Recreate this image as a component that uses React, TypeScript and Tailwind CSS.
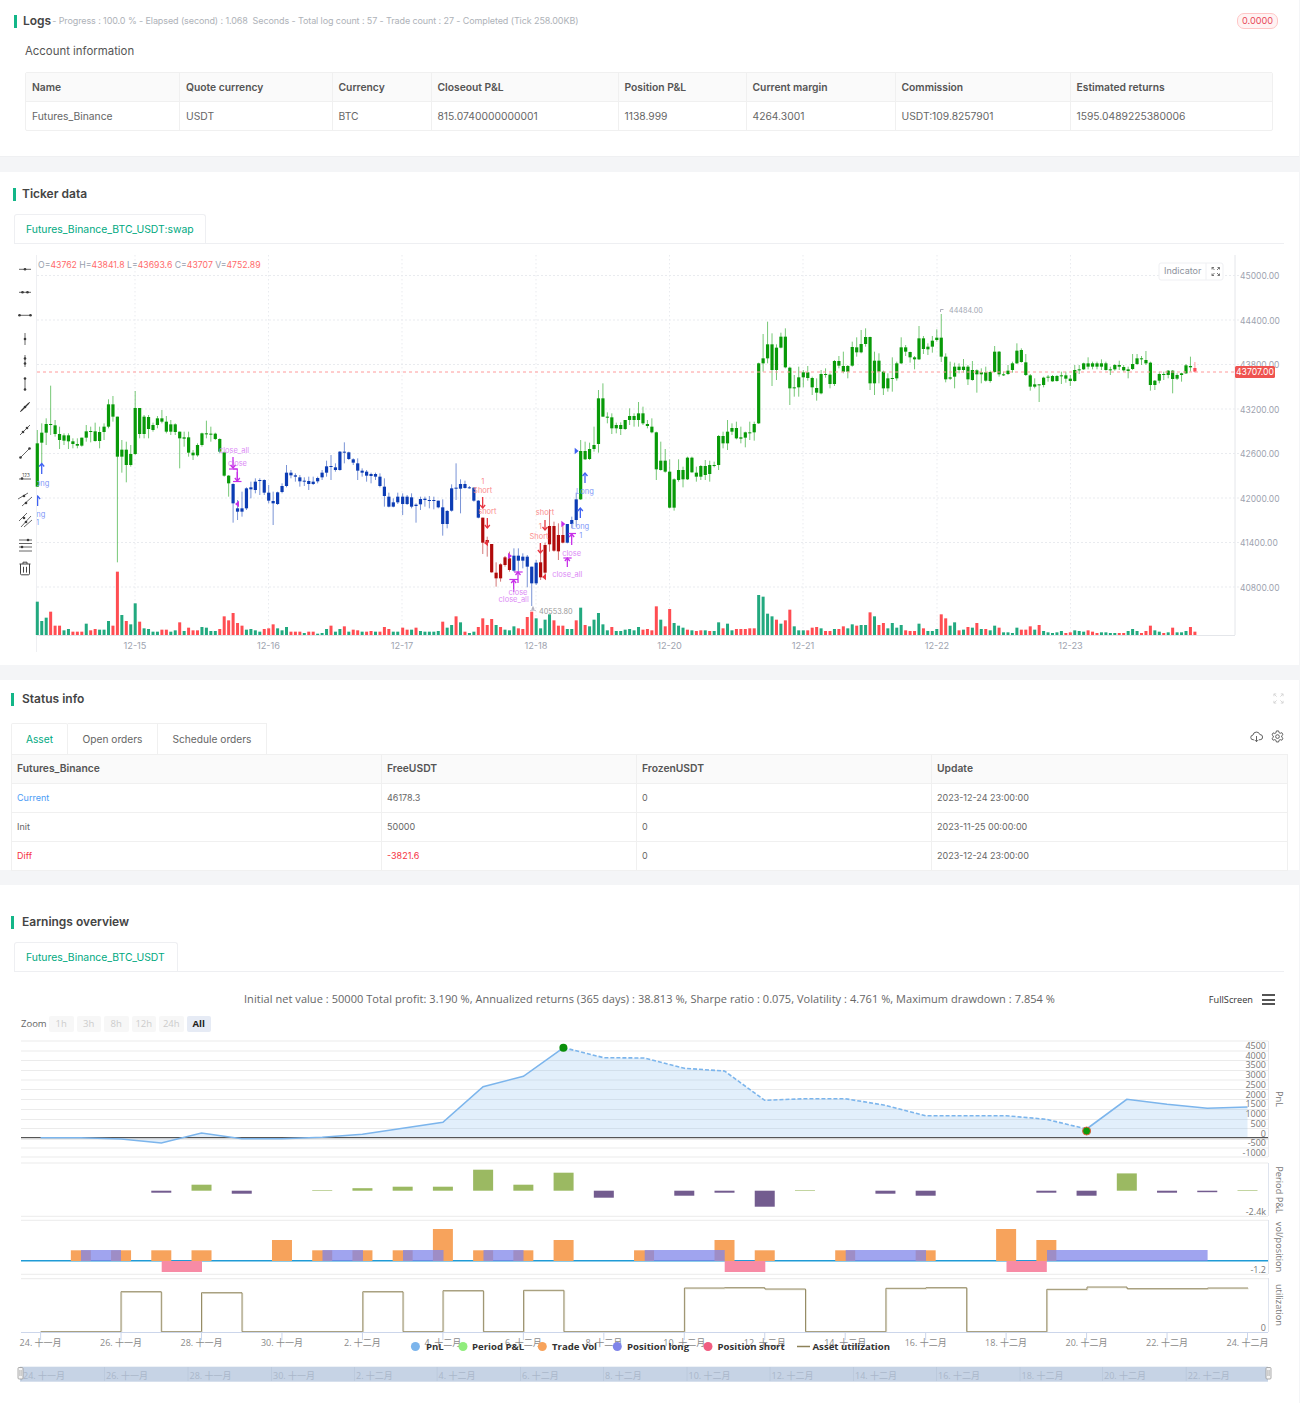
import React from "react";

const GREEN = "#089a08";
const BLUE = "#0c3cb4";
const RED = "#b00a0a";

// candles read off the picture: body top, body bottom, wick top, wick bottom (in 3x px, from y=250)
const CANDLES_A = `580,710,540,710 548,578,520,640 522,548,505,585 522,525,407,555 526,552,510,560 552,570,530,597 556,572,550,585 556,574,550,597 574,582,565,595 582,587,565,595 563,587,563,590 544,563,525,575 543,546,530,577 544,573,518,575 546,573,530,595 530,546,520,570 463,530,448,535 463,500,438,515 500,620,500,937 599,620,570,668 599,645,575,697 612,645,585,650 474,612,423,615 474,552,474,565 500,552,495,565 501,537,495,565 525,540,518,545 505,525,498,535 505,515,480,520 515,545,498,550 523,545,510,555 523,546,520,555 545,565,545,655 562,566,545,590 562,608,545,620 608,616,600,630 585,616,580,620 550,585,548,590 550,553,512,565 551,553,530,575 551,567,548,570 567,605,565,610 607,677,605,680 677,700,675,740 702,760,700,818 775,785,750,810 775,785,725,800 715,775,712,780 712,718,695,745 695,720,685,730 690,692,685,735 690,728,688,735 728,752,705,760 753,760,725,825 727,762,725,765 708,726,700,730 668,708,645,712 668,676,660,685 676,680,670,695 682,694,675,710 692,694,682,708 693,702,680,720 695,702,680,705 684,694,680,700 668,682,660,690 649,668,632,680 648,650,615,690 652,660,640,665 605,660,603,662 605,607,577,640 607,627,605,630 628,638,625,645 640,662,625,690 662,668,655,680 665,677,660,695 672,678,668,700 672,680,668,690 680,708,670,712 710,738,685,770 740,770,728,772 757,770,745,772 740,757,728,762`;
const CANDLES_B = `740,762,730,795 740,762,735,765 742,770,730,775 764,768,760,818 747,763,740,780 746,750,740,770 750,752,738,775 750,752,740,778 752,772,752,775 772,822,748,857 783,822,780,835 715,782,703,785 713,716,640,750 702,716,688,790 702,714,692,716 712,714,708,716 713,752,712,755 752,803,750,805 803,878,803,912 870,878,860,920 882,967,882,968 968,985,937,1010 943,985,940,995 922,945,918,950 925,960,905,965 917,962,895,965 917,932,895,965 920,932,910,955 920,950,915,1012 950,1000,950,1068 938,1000,930,1005 937,982,880,990 885,968,878,985 828,883,778,905 828,902,815,905 855,904,820,930 855,878,825,880 822,878,822,880 810,822,800,835 748,810,728,830 603,748,570,750 603,628,575,630 597,627,578,630 585,597,530,605 445,582,420,608 445,500,400,500 500,503,487,520 502,535,490,552 525,535,518,550 525,537,517,555 510,537,510,540 498,510,475,525 498,510,490,530 490,510,456,530 490,520,470,525 522,528,510,535 530,547,505,550 547,658,545,690 632,660,575,662 632,665,597,668 665,773,628,775 688,773,685,782 660,690,628,695 660,688,650,712 623,688,620,690 623,667,620,668 668,680,650,695 648,680,645,690 648,675,630,690 645,672,632,695 645,648,635,652 558,645,555,660 558,580,545,595 545,580,510,600 534,545,520,555 534,565,515,568 562,566,530,580 547,563,545,592 547,550,515,570 522,547,515,572 340,520,338,522 325,340,252,365 283,325,215,340 283,360,250,408 293,360,283,390 260,293,248,295 260,352,235,355 353,415,350,465 412,415,375,440 382,412,350,440`;
const CANDLES_C = `367,382,360,412 367,384,348,392 384,412,380,435 414,428,385,452 372,430,360,433 372,375,355,383 374,402,370,415 333,402,330,408 333,347,318,355 348,365,305,370 348,365,345,385 291,347,275,350 292,307,262,320 282,307,240,310 261,282,235,290 261,400,260,420 332,400,305,435 332,365,310,400 365,415,362,435 385,415,370,425 384,386,322,425 340,385,335,392 292,340,262,342 292,305,285,318 306,322,305,338 322,328,318,358 265,328,228,330 265,297,258,312 290,298,280,315 272,290,258,308 263,270,238,275 263,320,192,336 320,388,310,397 382,386,335,390 350,380,338,415 350,360,340,370 350,360,327,368 350,388,345,405 360,390,333,392 361,373,358,428 367,373,355,400 367,392,350,395 366,393,362,398 305,366,288,368 305,373,303,380 373,376,365,378 362,372,345,375 340,360,335,368 302,340,280,342 300,336,295,338 337,375,312,378 376,410,372,422 403,410,385,415 403,405,403,456 383,405,380,412 380,383,375,395 378,394,375,395 378,393,375,395 376,378,365,402 376,386,365,398 386,393,375,408 360,393,345,395 358,360,345,372 340,358,338,360 340,350,322,358 340,350,335,358 340,350,335,358 340,350,328,360 340,360,335,362 358,360,350,375 345,358,342,362 345,350,332,360 351,361,345,365 358,363,350,385 342,357,312,360 325,342,312,345 325,328,318,345 330,340,303,345 338,405,335,422 392,405,390,420 372,392,365,400 372,375,365,390 362,375,360,385 362,387,360,430 375,386,370,390 370,375,368,395 346,370,342,372 348,352,320,365 354,365,336,368`;
const VOLS_A = `g100 g42 g52 r70 r28 r28 g14 g18 r10 r10 r10 g34 r14 r18 g16 g16 g42 r28 r190 g60 r42 g32 g95 r40 g20 g18 g10 g10 r16 r16 g10 g14 r38 g12 r22 r14 r14 g24 g22 g12 g12 r18 r56 r44 r66 r36 r28 g16 g18 g14 g10 r18 r20 r32 g20 g14 g24 r10 r10 r10 g6 r10 r10 g4 g6 g18 r28 g10 g18 r26 g10 r16 r14 g10 r10 r12 g10 r10 r24 r18 g10 g10`;
const VOLS_B = `r22 r16 g16 r22 g12 g10 g10 g10 g12 r40 g22 g30 r56 g38 r10 g6 g10 r24 r50 r30 r48 g30 r24 g16 g14 g26 r20 r18 r54 r70 g50 g20 g46 g62 r44 r28 r28 g18 g18 r44 g82 r30 g26 g46 g66 g32 g14 r24 g12 g12 g16 g18 g14 g24 r16 r18 r14 r86 g46 r26 r78 g36 g28 g22 r16 g14 r12 r14 g14 r12 g12 g38 r20 g34 g14 r18 r18 r18 r20 r20 g120 g115 g64 g56 r46 g34 r44 r76 g26 g14`;
const VOLS_C = `g14 r14 r22 r24 g20 r12 r12 g18 r18 r26 g20 g32 r28 g30 g30 r68 g56 r30 r36 g20 g36 g22 g30 r14 r12 r12 g34 r20 g12 g12 g18 r62 r50 g28 g38 r14 g16 r24 g22 r36 g18 r18 g14 g28 r22 g8 g8 g6 g22 r16 r16 r26 g16 r30 g12 g8 g6 g8 g12 r6 r8 g14 g12 g10 r14 r10 r6 g8 g8 g6 g6 r6 r6 g12 g18 g12 r6 r12 r28 g14 g10 r6 g8 r22 g8 g8 g12 r24 r10`;

const STEP = 4.45;
const SECTIONS = [
  { x0: 37.3, candles: CANDLES_A, vols: VOLS_A },
  { x0: 402.67, candles: CANDLES_B, vols: VOLS_B },
  { x0: 803.3, candles: CANDLES_C, vols: VOLS_C },
];

function candleColor(x: number) {
  if (x < 230.5) return GREEN;
  if (x < 480) return BLUE;
  if (x < 511.7) return RED;
  if (x < 538.3) return BLUE;
  if (x < 565) return RED;
  if (x < 578.3) return BLUE;
  if (x > 1192) return "#ff4d57";
  return GREEN;
}

const Y = (v: number) => 250 + v / 3;

function Candles() {
  return (
    <g>
      {SECTIONS.map((s, si) =>
        s.candles.split(" ").map((row, i) => {
          const [t, b, wt, wb] = row.split(",").map(Number);
          const x = s.x0 + i * STEP;
          const c = candleColor(x);
          return (
            <g key={`${si}-${i}`}>
              <line x1={x} x2={x} y1={Y(wt)} y2={Y(wb)} stroke={c} strokeOpacity={0.55} strokeWidth={1} />
              <rect x={x - 1.6} y={Y(t)} width={3.2} height={Math.max(1, (b - t) / 3)} fill={c} />
            </g>
          );
        }),
      )}
    </g>
  );
}

function Volumes() {
  return (
    <g>
      {SECTIONS.map((s, si) =>
        s.vols.split(" ").map((v, i) => {
          const h = Number(v.slice(1)) / 3;
          return (
            <rect
              key={`${si}-${i}`}
              x={s.x0 + i * STEP - 1.5}
              y={635 - h}
              width={3}
              height={h}
              fill={v[0] === "g" ? "#22a97f" : "#ff4d52"}
            />
          );
        }),
      )}
    </g>
  );
}

// arrow with a head at (x,y2) coming from y1; bar draws the little cap the close marks have
function Arrow({ x, y1, y2, color, bar }: { x: number; y1: number; y2: number; color: string; bar?: boolean }) {
  const d = y2 > y1 ? -1 : 1;
  return (
    <g stroke={color} fill="none" strokeWidth={1.3}>
      <line x1={x} x2={x} y1={y1} y2={y2} />
      <path d={`M${x - 2.5} ${y2 + d * 3}L${x} ${y2}L${x + 2.5} ${y2 + d * 3}`} />
      {bar && <line x1={x - 4.5} x2={x + 4.5} y1={y2} y2={y2} />}
    </g>
  );
}

function Tri({ x, y, dir, color }: { x: number; y: number; dir: "l" | "r"; color: string }) {
  const p = dir === "l" ? `${x - 2} ${y}L${x + 2} ${y - 3.2}L${x + 2} ${y + 3.2}` : `${x + 2} ${y}L${x - 2} ${y - 3.2}L${x - 2} ${y + 3.2}`;
  return <path d={`M${p}Z`} fill={color} />;
}

function Label({ x, y, color, children, anchor = "middle" }: { x: number; y: number; color: string; children: React.ReactNode; anchor?: "middle" | "start" }) {
  return (
    <text x={x} y={y} fill={color} fontSize={7.5} textAnchor={anchor}>
      {children}
    </text>
  );
}

const MAG = "#c72fe8";
const MAGT = "#dc8cf5";
const BL = "#3f62f2";
const BLT = "#7f98f8";
const RD = "#e8343f";
const RDT = "#fb8d8d";

function Marks() {
  const zx = (z: number) => 400 + z / 3;
  return (
    <g>
      <g clipPath="url(#plot-clip)">
        <Arrow x={41.7} y1={474} y2={463.5} color={BL} />
        <Label x={41.7} y={485.5} color={BLT}>long</Label>
        <Arrow x={37.6} y1={506} y2={496} color={BL} />
        <Label x={37.6} y={517} color={BLT}>long</Label>
        <Label x={37.6} y={525} color={BLT}>1</Label>
      </g>
      <Label x={234} y={453} color={MAGT}>close_all</Label>
      <Label x={237.5} y={466} color={MAGT}>close</Label>
      <Arrow x={233} y1={457} y2={468} color={MAG} />
      <line x1={229} x2={237.5} y1={469} y2={469} stroke={MAG} strokeWidth={1.2} />
      <path d="M233 469H237.3V481" fill="none" stroke={MAG} strokeWidth={1.2} />
      <Arrow x={237.3} y1={472} y2={481} color={MAG} />
      <line x1={233} x2={241.5} y1={481.5} y2={481.5} stroke={MAG} strokeWidth={1.2} />
      <Tri x={237} y={504} dir="l" color={MAG} />

      <Label x={zx(248)} y={484} color={RDT}>1</Label>
      <Label x={zx(248)} y={493} color={RDT}>Short</Label>
      <Arrow x={zx(248)} y1={497} y2={508} color={RD} />
      <Label x={zx(262)} y={514} color={RDT}>short</Label>
      <Arrow x={zx(262)} y1={518} y2={528} color={RD} />
      <Tri x={zx(258)} y={543} dir="l" color={RD} />

      <Tri x={zx(330)} y={556} dir="r" color={MAG} />
      <Arrow x={zx(354)} y1={583} y2={572} color={MAG} />
      <line x1={zx(342)} x2={zx(368)} y1={572} y2={572} stroke={MAG} strokeWidth={1.2} />
      <Arrow x={zx(341)} y1={592} y2={580} color={MAG} />
      <line x1={zx(328)} x2={zx(354)} y1={579.5} y2={579.5} stroke={MAG} strokeWidth={1.2} />
      <Label x={zx(354)} y={594.5} color={MAGT}>close</Label>
      <Label x={zx(341)} y={602} color={MAGT}>close_all</Label>

      <path d="M531.7 609.5h2.5l-1.2-3zM530 610.5h6" fill="#aab" stroke="#aab" strokeWidth={0.6} />
      <text x={539} y={614} fontSize={7.3} fill="#9a9a9a">40553.80</text>

      <Label x={zx(435)} y={515} color={RDT}>short</Label>
      <Arrow x={zx(435)} y1={520} y2={530} color={RD} />
      <Label x={zx(421)} y={529} color={RDT}>1</Label>
      <Label x={zx(417)} y={539} color={RDT}>Short</Label>
      <Arrow x={zx(421)} y1={543} y2={553} color={RD} />
      <Tri x={zx(432)} y={577} dir="l" color={RD} />

      <Label x={zx(515)} y={556} color={MAGT}>close</Label>
      <Arrow x={zx(502)} y1={567} y2={558} color={MAG} />
      <line x1={zx(490)} x2={zx(515)} y1={558} y2={558} stroke={MAG} strokeWidth={1.2} />
      <Label x={zx(502)} y={577} color={MAGT}>close_all</Label>
      <Arrow x={zx(515)} y1={545} y2={534} color={MAG} />
      <line x1={zx(505)} x2={zx(528)} y1={533.5} y2={533.5} stroke={MAG} strokeWidth={1.2} />
      <Label x={zx(542)} y={538} color={BLT}>1</Label>
      <Tri x={zx(490)} y={524} dir="r" color={MAG} />
      <Label x={zx(541)} y={529} color={BLT}>Long</Label>
      <Arrow x={zx(541)} y1={518} y2={508} color={BL} />
      <Label x={zx(555)} y={494} color={BLT}>Long</Label>
      <Arrow x={zx(555)} y1={483} y2={473} color={BL} />
      <Tri x={zx(530)} y={451} dir="r" color={BL} />

      <path d="M940.5 312v-2.5h3" fill="none" stroke="#99a" strokeWidth={0.8} />
      <text x={949} y={312.5} fontSize={7.2} fill="#a2a6b2">44484.00</text>
    </g>
  );
}

const DOT = "#3a3a3a";
function Dots({ pts }: { pts: [number, number][] }) {
  return (
    <>
      {pts.map(([x, y], i) => (
        <circle key={i} cx={x} cy={y} r={1.3} fill={DOT} />
      ))}
    </>
  );
}

// left hand drawing tools column, every icon is centred on x=25
function DrawTools() {
  const seg = (x1: number, y1: number, x2: number, y2: number) => (
    <line x1={x1} y1={y1} x2={x2} y2={y2} stroke="#555" strokeWidth={0.9} />
  );
  return (
    <g>
      {seg(19, 269.3, 31, 269.3)}
      <Dots pts={[[25, 269.3]]} />
      {seg(19, 292.3, 31, 292.3)}
      <Dots pts={[[22.5, 292.3], [27.5, 292.3]]} />
      {seg(19, 315.3, 31, 315.3)}
      <Dots pts={[[19.5, 315.3], [30.5, 315.3]]} />
      {seg(25, 333, 25, 345)}
      <Dots pts={[[25, 339]]} />
      {seg(25, 355, 25, 367)}
      <Dots pts={[[25, 358.5], [25, 363.5]]} />
      {seg(25, 378, 25, 390)}
      <Dots pts={[[25, 378.5], [25, 389.5]]} />
      {seg(20, 412, 30, 402)}
      <Dots pts={[[25, 407]]} />
      <line x1={21} y1={411} x2={29} y2={403} stroke="#333" strokeWidth={1.2} />
      {seg(20, 435, 30, 425)}
      <Dots pts={[[23, 432], [27, 428]]} />
      {seg(20, 458, 30, 448)}
      <Dots pts={[[20.5, 457.5], [29.5, 448.5]]} />
      {seg(19, 479, 31, 479)}
      <Dots pts={[[22, 478.5]]} />
      <text x={26} y={477} fontSize={4.5} fill="#444" textAnchor="middle">123</text>
      {seg(18, 499, 28, 493)}
      {seg(22, 506, 32, 497)}
      <Dots pts={[[24, 496], [26, 503]]} />
      {seg(19, 521, 27, 513)}
      {seg(21, 527, 31, 516)}
      {seg(24, 527, 32, 520)}
      <Dots pts={[[24, 518], [26, 522]]} />
      {seg(19, 540, 32, 540)}
      {seg(19, 543.5, 32, 543.5)}
      {seg(19, 547, 32, 547)}
      {seg(19, 551, 32, 551)}
      <Dots pts={[[28, 540], [22, 547]]} />
      <g fill="none" stroke="#444" strokeWidth={1}>
        <path d="M19.5 564h11M23 564v-1.8h4V564M20.5 564v9.8c0 .7.4 1 1 1h7c.6 0 1-.3 1-1V564M23.5 566.8v5.8M26.5 566.8v5.8" />
      </g>
    </g>
  );
}

const PRICES = ["45000.00", "44400.00", "43800.00", "43200.00", "42600.00", "42000.00", "41400.00", "40800.00"];
const PRICE_Y = [275.5, 320, 364.5, 409, 453.5, 498, 542.5, 587];
const DAYS: [number, string][] = [
  [135, "12-15"],
  [268.5, "12-16"],
  [402, "12-17"],
  [536, "12-18"],
  [669.5, "12-20"],
  [803, "12-21"],
  [937, "12-22"],
  [1070.5, "12-23"],
];

function TickerChart() {
  return (
    <svg viewBox="0 250 1300 410" className="mt-[6px] block h-[410px] w-[1300px]" style={{ fontFamily: "Inter, sans-serif" }}>
      <defs>
        <clipPath id="plot-clip">
          <rect x={37} y={250} width={1198} height={385} />
        </clipPath>
      </defs>
      <line x1={36.5} x2={36.5} y1={255} y2={652} stroke="#eeeff2" />
      <line x1={1235} x2={1235} y1={255} y2={635} stroke="#e4e6ea" />
      <line x1={37} x2={1235} y1={635.5} y2={635.5} stroke="#e4e6ea" />
      {PRICE_Y.map((y) => (
        <line key={y} x1={37} x2={1240} y1={y} y2={y} stroke="#e9ebef" strokeDasharray="2 2" />
      ))}
      {DAYS.map(([x]) => (
        <line key={x} x1={x} x2={x} y1={255} y2={640} stroke="#e9ebef" strokeDasharray="1.5 2.5" />
      ))}
      {PRICES.map((p, i) => (
        <text key={p} x={1240} y={PRICE_Y[i] + 3.5} fontSize={8.5} fill="#9ea3af">
          {p}
        </text>
      ))}
      {DAYS.map(([x, d]) => (
        <text key={d} x={x} y={648.5} fontSize={9.2} fill="#9ea3af" textAnchor="middle">
          {d}
        </text>
      ))}
      <Volumes />
      <Candles />
      <line x1={37} x2={1235} y1={372} y2={372} stroke="#ff9a9a" strokeDasharray="3 3" />
      <rect x={1235} y={366} width={40} height={12} rx={1.5} fill="#ef5350" />
      <text x={1255} y={375} fontSize={8.7} fill="#fff" textAnchor="middle">
        43707.00
      </text>
      <Marks />
      <DrawTools />
      <text x={38} y={268} fontSize={8.7}>
        {[
          ["O=", "43762"],
          ["H=", "43841.8"],
          ["L=", "43693.6"],
          ["C=", "43707"],
          ["V=", "4752.89"],
        ].map(([k, v]) => (
          <React.Fragment key={k}>
            <tspan fill="#98a0ae">{k}</tspan>
            <tspan fill="#ff6b6b">{v} </tspan>
          </React.Fragment>
        ))}
      </text>
      <rect x={1159} y={263} width={64} height={17} rx={2} fill="#fff" stroke="#eff0f3" />
      <line x1={1206} x2={1206} y1={263} y2={280} stroke="#eff0f3" />
      <text x={1164} y={274} fontSize={9} fill="#8d929c">
        Indicator
      </text>
      <path
        d="M1212 267.5l2.5 2.5M1219.5 267.5l-2.5 2.5M1212 275.5l2.5-2.5M1219.5 275.5l-2.5-2.5M1212 267.5v2M1212 267.5h2M1219.5 267.5v2M1219.5 267.5h-2M1212 275.5v-2M1212 275.5h2M1219.5 275.5v-2M1219.5 275.5h-2"
        stroke="#666"
        strokeWidth={0.9}
        fill="none"
      />
    </svg>
  );
}

// --- earnings chart ---
const PX = (i: number) => 40.6 + 40.23 * i;
const PNL = [1137.7, 1137.7, 1139, 1143, 1133, 1138.7, 1138.7, 1137.3, 1134.3, 1128.3, 1122.3, 1086.7, 1076.3, 1047.7, 1057.7, 1058, 1068.3, 1071, 1100.3, 1098.7, 1098.7, 1105.3, 1115.7, 1115.7, 1115.7, 1119.3, 1129, 1099.3, 1104.3, 1108.3, 1107];
const PERIOD: [number, number][] = [[3, -2], [4, 6], [5, -3], [7, 0.6], [8, 2.5], [9, 4], [10, 4], [11, 21], [12, 6], [13, 18], [14, -7], [16, -5], [17, -2], [18, -16], [19, 0.6], [21, -3], [22, -5], [25, -2], [26, -5], [27, 17.3], [28, -2], [29, -1.5], [30, 0.6]];
const TRADE: [number, number][] = [[1, 10.7], [2, 10.7], [3, 10.7], [4, 10.7], [6, 21], [7, 10.7], [8, 10.7], [9, 10.7], [10, 32], [11, 10.7], [12, 10.7], [13, 21], [15, 10.7], [17, 21], [18, 10.7], [20, 10.7], [22, 10.7], [24, 32], [25, 21]];
const LONGS: [number, number][] = [[81, 121], [322.5, 363], [403, 443.5], [483.5, 523.5], [644.7, 724.7], [845.7, 926], [1047, 1207.6]];
const SHORTS: [number, number][] = [[161.7, 202], [724.7, 765.3], [1006.5, 1046.8]];
const UTIL = "M40.6 1331.7H121V1291.7H161.3V1331.7H201.5V1292.7H242V1331.7H362.8V1291.7H403V1331.7H443V1290.7H483.4V1331.7H523.6V1290.3H563.9V1331.7H684.4V1288H724.6V1287.7H764.8V1289H805.5V1331.7H885.9V1288.3H926V1287.7H966.7V1331.7H1046.8V1289.3H1087V1287H1127V1288.7H1207.6V1288H1248";
const GRID_Y = [1041, 1051, 1060.5, 1070.5, 1080, 1089.5, 1099.5, 1109.5, 1119.5, 1128.5, 1148, 1157];
const PNL_TICKS: [string, number][] = [["4500", 1049], ["4000", 1059], ["3500", 1068.5], ["3000", 1078], ["2500", 1088], ["2000", 1098], ["1500", 1107.5], ["1000", 1117], ["500", 1127], ["0", 1137], ["-500", 1146.5], ["-1000", 1156]];
const AXIS_LABELS = ["24. 十一月", "26. 十一月", "28. 十一月", "30. 十一月", "2. 十二月", "4. 十二月", "6. 十二月", "8. 十二月", "10. 十二月", "12. 十二月", "14. 十二月", "16. 十二月", "18. 十二月", "20. 十二月", "22. 十二月", "24. 十二月"];
const NAV_X = [23, 106, 189.5, 273, 356, 438.6, 522, 605, 688.5, 771.5, 855, 938, 1021.5, 1104, 1187.7];
const LEGEND: [number, number, string, string][] = [
  [415.4, 426, "#7cb5ec", "PnL"],
  [463, 472, "#90ed7d", "Period P&L"],
  [542.3, 552, "#f7a35c", "Trade Vol"],
  [617.3, 627, "#8085e9", "Position long"],
  [708, 717.6, "#f15c80", "Position short"],
];
const SIDE_TITLES: [string, number][] = [["PnL", 1099], ["Period P&L", 1190], ["vol/position", 1247], ["utilization", 1305]];

function EarningsChart() {
  const points = PNL.map((y, i) => `${PX(i).toFixed(1)} ${y}`);
  const solidA = `M${points.slice(0, 14).join("L")}`;
  const dashed = `M${points.slice(13, 27).join("L")}`;
  const solidB = `M${points.slice(26).join("L")}`;
  const area = `M${points.join("L")}L${PX(30)} 1137.7L${PX(0)} 1137.7Z`;
  const axisFont = { fontFamily: "'Open Sans','Noto Sans CJK SC',sans-serif", fontSize: 9, fill: "#8a8a8a" };
  return (
    <svg viewBox="0 1034 1300 360" className="mt-[2px] block h-[360px] w-[1300px]" style={{ fontFamily: "'Open Sans','Noto Sans CJK SC',sans-serif" }}>
      {/* PnL */}
      {GRID_Y.map((y) => (
        <line key={y} x1={21} x2={1268} y1={y} y2={y} stroke="#ebebeb" />
      ))}
      <path d={area} fill="#7cb5ec" fillOpacity={0.22} />
      <line x1={21} x2={1268} y1={1137.7} y2={1137.7} stroke="#555" strokeWidth={1.2} />
      <line x1={21} x2={1268} y1={1139} y2={1139} stroke="#d8d8d8" />
      <line x1={1268.5} x2={1268.5} y1={1041} y2={1157} stroke="#e6e8ee" />
      <path d={solidA} fill="none" stroke="#7cb5ec" strokeWidth={1.6} />
      <path d={dashed} fill="none" stroke="#7cb5ec" strokeWidth={1.6} strokeDasharray="4 2" />
      <path d={solidB} fill="none" stroke="#7cb5ec" strokeWidth={1.6} />
      <circle cx={563.4} cy={1047.7} r={4} fill="#0a8f0a" />
      <circle cx={1086.6} cy={1131} r={4} fill="#0a9a0a" stroke="#e0603c" strokeWidth={1} />
      {PNL_TICKS.map(([t, y]) => (
        <text key={t} x={1266} y={y - 0.5} textAnchor="end" {...axisFont} fill="#777">
          {t}
        </text>
      ))}

      {/* Period P&L */}
      <line x1={21} x2={1268} y1={1163} y2={1163} stroke="#ebebeb" />
      <line x1={21} x2={1268} y1={1216.3} y2={1216.3} stroke="#ebebeb" />
      <line x1={1268.5} x2={1268.5} y1={1163} y2={1216} stroke="#dfe4ee" />
      {PERIOD.map(([i, v]) => (
        <rect key={i} x={PX(i) - 10} y={v > 0 ? 1190.7 - v : 1190.7} width={20} height={Math.abs(v)} fill={v > 0 ? "#9bb962" : "#735c8f"} />
      ))}
      <text x={1266} y={1214.5} textAnchor="end" {...axisFont} fill="#777">
        -2.4k
      </text>

      {/* vol / position */}
      <line x1={21} x2={1268} y1={1220.3} y2={1220.3} stroke="#ebebeb" />
      <line x1={21} x2={1268} y1={1274.3} y2={1274.3} stroke="#ebebeb" />
      <line x1={1268.5} x2={1268.5} y1={1220} y2={1274} stroke="#dfe4ee" />
      <line x1={21} x2={1268} y1={1260.7} y2={1260.7} stroke="#1f9bd6" strokeWidth={1.4} />
      {TRADE.map(([i, h]) => (
        <rect key={i} x={PX(i) - 10} y={1261 - h} width={20} height={h} fill="#f7a35c" />
      ))}
      {LONGS.map(([a, b]) => (
        <rect key={a} x={a} y={1250} width={b - a} height={11} fill="#8085e9" fillOpacity={0.75} />
      ))}
      {SHORTS.map(([a, b]) => (
        <rect key={a} x={a} y={1261} width={b - a} height={11} fill="#f78ba5" />
      ))}
      <text x={1266} y={1272.5} textAnchor="end" {...axisFont} fill="#777">
        -1.2
      </text>

      {/* utilization */}
      <line x1={21} x2={1268} y1={1278.7} y2={1278.7} stroke="#ebebeb" />
      <line x1={1268.5} x2={1268.5} y1={1278} y2={1332} stroke="#dfe4ee" />
      <path d={UTIL} fill="none" stroke="#e2dfd0" strokeWidth={1} transform="translate(0.8 0.8)" />
      <path d={UTIL} fill="none" stroke="#968c66" strokeWidth={1} />
      <text x={1266} y={1331} textAnchor="end" {...axisFont} fill="#777">
        0
      </text>
      <line x1={21} x2={1268} y1={1332.5} y2={1332.5} stroke="#ccd6eb" />

      {SIDE_TITLES.map(([t, y]) => (
        <text key={t} x={1276} y={y} transform={`rotate(90 1276 ${y})`} textAnchor="middle" fontSize={9.2} fill="#777">
          {t}
        </text>
      ))}

      {AXIS_LABELS.map((t, k) => (
        <g key={t}>
          <line x1={PX(k * 2)} x2={PX(k * 2)} y1={1332} y2={1340} stroke="#ccd6eb" />
          <text x={PX(k * 2)} y={1346} textAnchor="middle" {...axisFont}>
            {t}
          </text>
        </g>
      ))}

      {LEGEND.map(([cx, tx, c, t]) => (
        <g key={t}>
          <circle cx={cx} cy={1346.5} r={4.5} fill={c} />
          <text x={tx} y={1350} fontSize={9.6} fontWeight={700} fill="#333">
            {t}
          </text>
        </g>
      ))}
      <line x1={797} x2={810} y1={1346.5} y2={1346.5} stroke="#8d8258" strokeWidth={1.5} />
      <text x={812.5} y={1350} fontSize={9.6} fontWeight={700} fill="#333">
        Asset utilization
      </text>

      {/* navigator */}
      <rect x={20} y={1366.7} width={1248} height={15} fill="#c6d3e5" />
      {NAV_X.map((x, k) => (
        <g key={x}>
          <line x1={x - 1.5} x2={x - 1.5} y1={1367} y2={1381} stroke="#bccadd" />
          <text x={x} y={1378.5} fontSize={9} fill="#aab7ca">
            {AXIS_LABELS[k]}
          </text>
        </g>
      ))}
      {[18, 1266].map((x) => (
        <g key={x}>
          <rect x={x} y={1367.5} width={5} height={11.5} rx={1} fill="#f4f4f4" stroke="#999" strokeWidth={0.8} />
          <path d={`M${x + 1.8} 1370v6M${x + 3.2} 1370v6`} stroke="#999" strokeWidth={0.6} />
        </g>
      ))}
    </svg>
  );
}

function Heading({ title, left = "ml-[13px] gap-[6px]" }: { title: string; left?: string }) {
  return (
    <div className={`flex items-center ${left}`}>
      <span className="h-[13px] w-[3px] bg-[#13b688]" />
      <h2 className="text-[12px] font-semibold leading-[14px] text-[#444]">{title}</h2>
    </div>
  );
}

function Tab({ label, width }: { label: string; width: string }) {
  return (
    <div className="mt-[13px] mr-[15px] ml-[14px] flex h-[30px] border-b border-[#eeeff2]">
      <div className={`flex items-center rounded-t-[3px] border border-b-0 border-[#eeeff2] bg-white pt-[1px] pl-[11px] text-[10.4px] text-[#00a97f] ${width}`}>
        {label}
      </div>
    </div>
  );
}

const ACCOUNT_COLS = "grid-cols-[154px_152.5px_99px_187px_128px_149px_175px_203.5px]";
const ACCOUNT_HEAD = ["Name", "Quote currency", "Currency", "Closeout P&L", "Position P&L", "Current margin", "Commission", "Estimated returns"];
const ACCOUNT_ROW = ["Futures_Binance", "USDT", "BTC", "815.0740000000001", "1138.999", "4264.3001", "USDT:109.8257901", "1595.0489225380006"];
const STATUS_COLS = "grid-cols-[370px_255px_295px_357px]";
const STATUS_ROWS = [
  { cells: ["Current", "46178.3", "0", "2023-12-24 23:00:00"], first: "text-[#4a9cf5]", second: "" },
  { cells: ["Init", "50000", "0", "2023-11-25 00:00:00"], first: "", second: "" },
  { cells: ["Diff", "-3821.6", "0", "2023-12-24 23:00:00"], first: "text-[#f5333f]", second: "text-[#f5333f]" },
];

export default function App() {
  return (
    <div className="h-[1403px] w-[1300px] overflow-hidden bg-[#f4f5f7] font-['Inter',sans-serif] text-[#555]">
      {/* Logs */}
      <section className="h-[157px] w-[1299px] border-b border-[#eff0f2] bg-white pt-[13px]">
        <div className="flex h-[16px] items-center pr-[21px] pl-[14px]">
          <span className="h-[13px] w-[3px] bg-[#13b688]" />
          <span className="ml-[6px] text-[12px] font-semibold text-[#444]">Logs</span>
          <span className="ml-[1px] text-[9px] tracking-[-0.1px] text-[#aeb2b8]">
            - Progress : 100.0 % - Elapsed (second) : 1.068&nbsp; Seconds - Total log count : 57 - Trade count : 27 - Completed (Tick 258.00KB)
          </span>
          <span className="ml-auto flex h-[16px] w-[41px] items-center justify-center rounded-[7px] border border-[#ffc6c6] bg-[#fff3f3] text-[9.2px] text-[#e8495a]">
            0.0000
          </span>
        </div>
        <h3 className="mt-[14px] ml-[25px] text-[11.4px] leading-[16px] text-[#555]">Account information</h3>
        <div className="mt-[13px] ml-[25px] w-[1248px] rounded-[2px] border border-[#f0f0f0] text-[10.3px]">
          <div className={`grid h-[29px] items-center border-b border-[#f0f0f0] bg-[#fafafa] font-semibold text-[#555] ${ACCOUNT_COLS}`}>
            {ACCOUNT_HEAD.map((h) => (
              <div key={h} className="flex h-full items-center border-r border-[#f0f0f0] pt-[1px] pl-[6px] last:border-r-0">
                {h}
              </div>
            ))}
          </div>
          <div className={`grid h-[28px] items-center text-[#666] ${ACCOUNT_COLS}`}>
            {ACCOUNT_ROW.map((c) => (
              <div key={c} className="flex h-full items-center border-r border-[#f0f0f0] pt-[1px] pl-[6px] last:border-r-0">
                {c}
              </div>
            ))}
          </div>
        </div>
      </section>

      {/* Ticker data */}
      <section className="mt-[15px] h-[493px] w-[1299px] bg-white pt-[15px]">
        <Heading title="Ticker data" />
        <Tab label="Futures_Binance_BTC_USDT:swap" width="w-[192px]" />
        <TickerChart />
      </section>

      {/* Status info */}
      <section className="mt-[15px] h-[190px] w-[1299px] bg-white pt-[12px]">
        <div className="relative">
          <Heading title="Status info" left="ml-[11px] gap-[8px]" />
          <svg viewBox="0 0 12 12" className="absolute top-[1px] right-[15px] h-[11px] w-[11px]" fill="none" stroke="#d5d5d5" strokeWidth={1}>
            <path d="M1 1l3 3M1 1v2.5M1 1h2.5M11 1L8 4M11 1v2.5M11 1H8.5M1 11l3-3M1 11V8.5M1 11h2.5M11 11L8 8M11 11V8.5M11 11H8.5" />
          </svg>
        </div>
        <div className="mt-[17px] flex h-[31px] items-stretch justify-between pr-[15px] pl-[11px] text-[10.2px]">
          <div className="flex">
            <div className="flex w-[57px] items-center justify-center rounded-t-[2px] border border-b-0 border-[#f0f0f0] pt-[1px] text-[#00a97f]">Asset</div>
            <div className="flex w-[90px] items-center justify-center border-t border-r border-[#f0f0f0] pt-[1px] text-[#666]">Open orders</div>
            <div className="flex w-[109px] items-center justify-center border-t border-r border-[#f0f0f0] pt-[1px] text-[#666]">Schedule orders</div>
          </div>
          <div className="flex items-center gap-[8px] pb-[4px] text-[#555]">
            <svg viewBox="0 0 14 14" className="h-[13px] w-[13px]" fill="none" stroke="#555" strokeWidth={1}>
              <path d="M4.5 10.5H3.5a2.5 2.5 0 0 1-.3-5 3.8 3.8 0 0 1 7.4-.6 2.8 2.8 0 0 1 .3 5.6H9.5M7 6.5v6M5.2 10.8L7 12.6l1.8-1.8" />
            </svg>
            <svg viewBox="0 0 14 14" className="h-[13px] w-[13px]" fill="none" stroke="#555" strokeWidth={1}>
              <path d="M5.8 1h2.4l.4 1.8 1.3.7 1.8-.6 1.2 2.1-1.4 1.2v1.5l1.4 1.2-1.2 2.1-1.8-.6-1.3.7-.4 1.8H5.8l-.4-1.8-1.3-.7-1.8.6L1.1 9.1l1.4-1.2V6.4L1.1 5.2 2.3 3.1l1.8.6 1.3-.7z" />
              <circle cx={7} cy={7.1} r={2} />
            </svg>
          </div>
        </div>
        <div className="mr-[11px] ml-[11px] border border-[#f0f0f0] text-[9px] text-[#666]">
          <div className={`grid h-[28px] bg-[#fafafa] text-[10.3px] font-semibold text-[#555] ${STATUS_COLS}`}>
            {["Futures_Binance", "FreeUSDT", "FrozenUSDT", "Update"].map((h) => (
              <div key={h} className="flex items-center border-r border-[#f0f0f0] pl-[5px] last:border-r-0">
                {h}
              </div>
            ))}
          </div>
          {STATUS_ROWS.map((r) => (
            <div key={r.cells[0]} className={`grid h-[29px] border-t border-[#f0f0f0] ${STATUS_COLS}`}>
              {r.cells.map((c, i) => (
                <div key={i} className={`flex items-center border-r border-[#f0f0f0] pl-[5px] last:border-r-0 ${i === 0 ? r.first : i === 1 ? r.second : ""}`}>
                  {c}
                </div>
              ))}
            </div>
          ))}
        </div>
      </section>

      {/* Earnings overview */}
      <section className="mt-[15px] h-[518px] w-[1299px] bg-white pt-[30px]">
        <Heading title="Earnings overview" left="ml-[11px] gap-[8px]" />
        <Tab label="Futures_Binance_BTC_USDT" width="w-[164px]" />
        <div className="relative mt-[17px] h-[20px] font-['Open_Sans',sans-serif]">
          <p className="text-center text-[11px] leading-[20px] tracking-[0.05px] text-[#666]">
            Initial net value : 50000 Total profit: 3.190 %, Annualized returns (365 days) : 38.813 %, Sharpe ratio : 0.075, Volatility : 4.761 %, Maximum drawdown : 7.854 %
          </p>
          <div className="absolute top-[4px] right-[24px] flex items-center gap-[9px]">
            <span className="text-[9.2px] text-[#333]">FullScreen</span>
            <span className="flex h-[11px] w-[13px] flex-col justify-between">
              <i className="h-[2px] bg-[#555]" />
              <i className="h-[2px] bg-[#555]" />
              <i className="h-[2px] bg-[#555]" />
            </span>
          </div>
        </div>
        <div className="mt-[7px] ml-[21px] flex h-[16px] items-center gap-[3px] font-['Open_Sans',sans-serif] text-[9.5px] text-[#ccc]">
          <span className="mr-[1px] w-[24px] text-[#666]">Zoom</span>
          {["1h", "3h", "8h", "12h", "24h"].map((z) => (
            <span key={z} className="flex h-[16px] w-[24.5px] items-center justify-center rounded-[2px] bg-[#f7f7f7]">
              {z}
            </span>
          ))}
          <span className="flex h-[16px] w-[24.5px] items-center justify-center rounded-[2px] bg-[#e6ebf5] font-bold text-[#222]">All</span>
        </div>
        <EarningsChart />
      </section>
    </div>
  );
}
